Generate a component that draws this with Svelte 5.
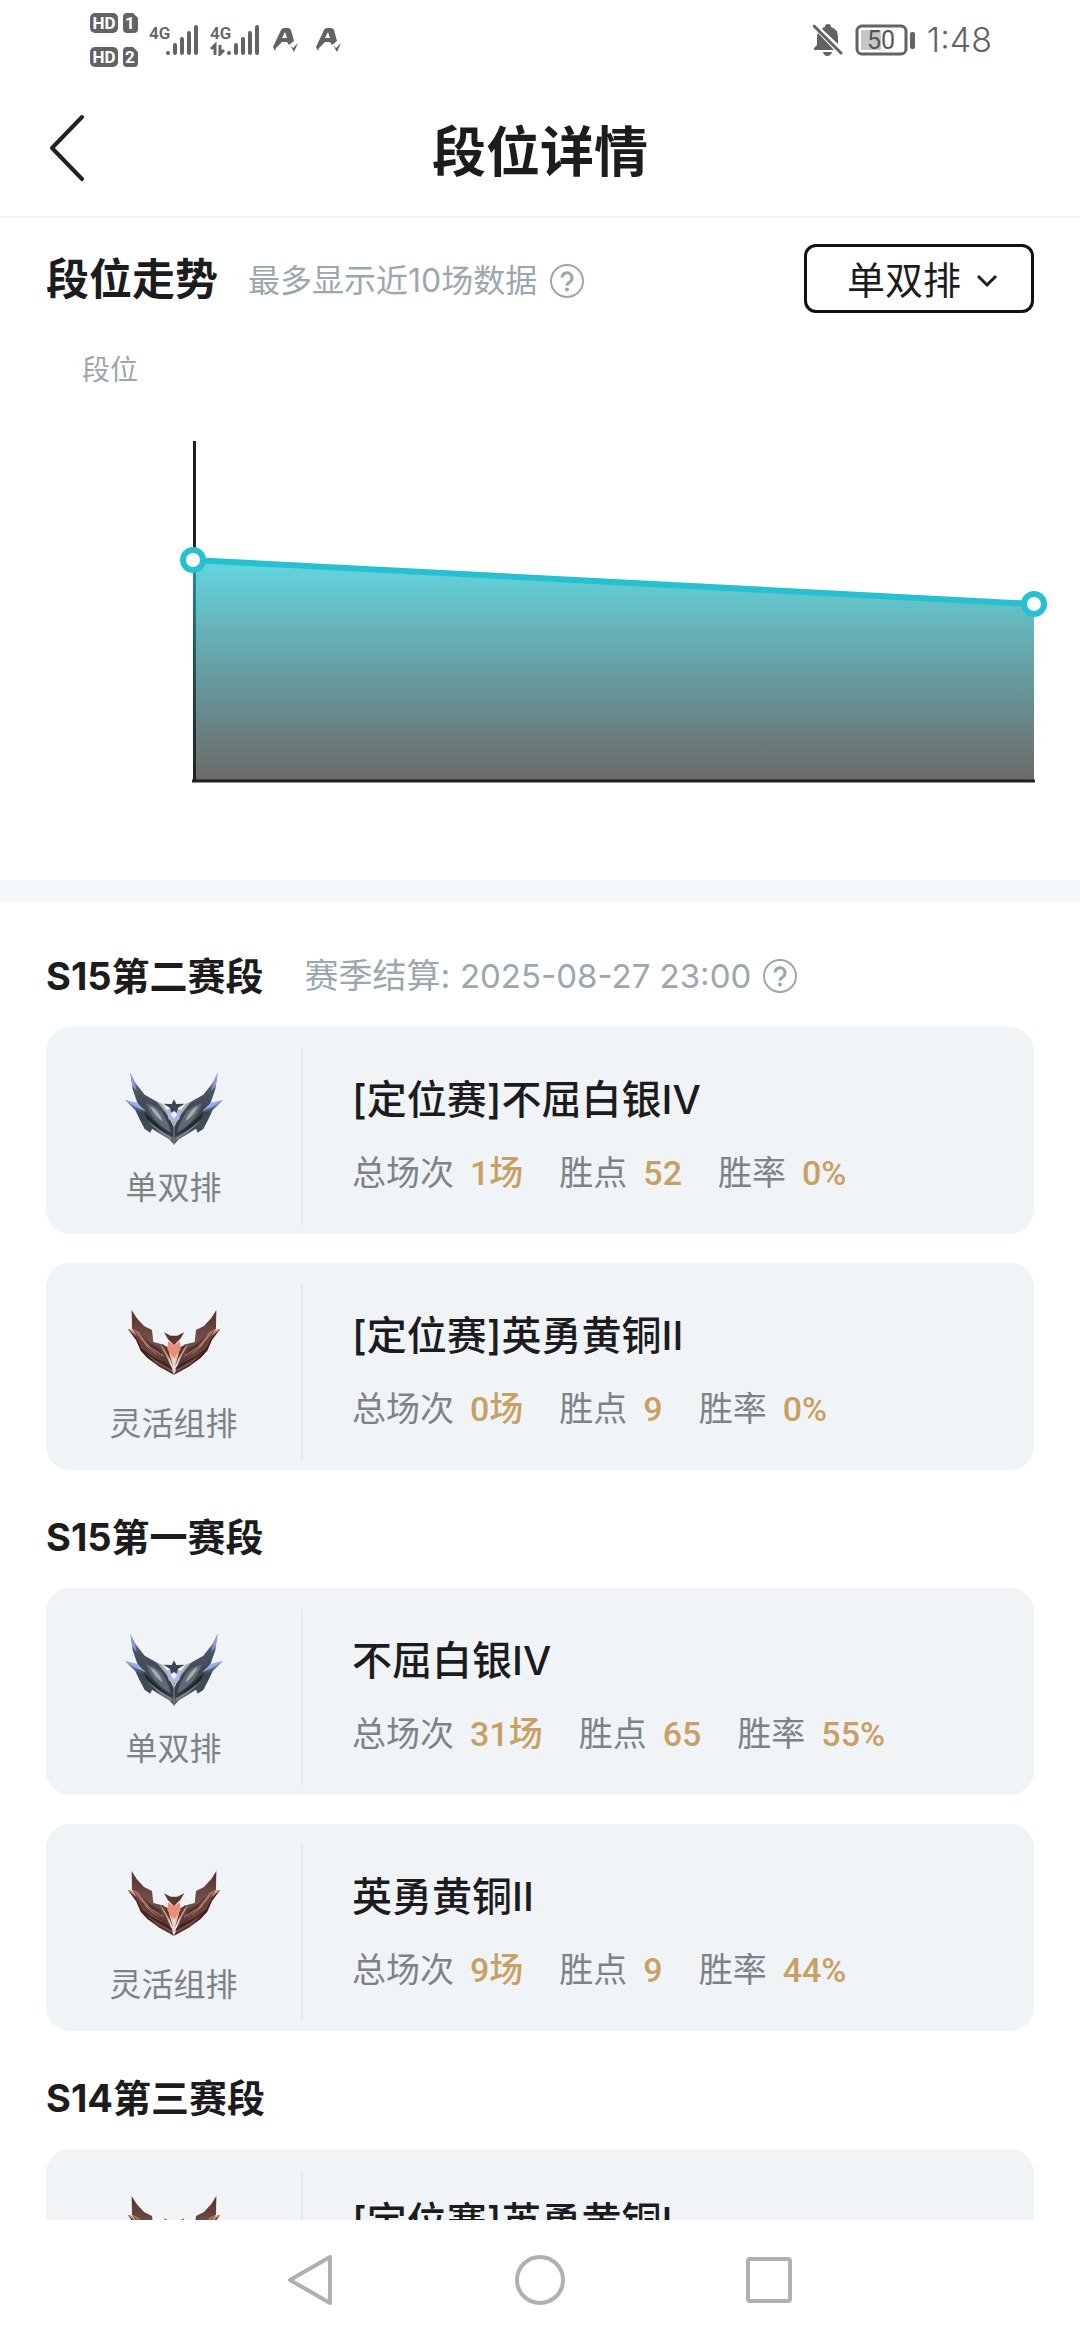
<script>
  const seasons = [
    {
      name: 'S15第二赛段',
      settle: '2025-08-27 23:00',
      ranks: [
        { tier: 'silver', queue: '单双排', title: '[定位赛]不屈白银IV', stats: [['总场次', '1场'], ['胜点', '52'], ['胜率', '0%']] },
        { tier: 'bronze', queue: '灵活组排', title: '[定位赛]英勇黄铜II', stats: [['总场次', '0场'], ['胜点', '9'], ['胜率', '0%']] }
      ]
    },
    {
      name: 'S15第一赛段',
      ranks: [
        { tier: 'silver', queue: '单双排', title: '不屈白银IV', stats: [['总场次', '31场'], ['胜点', '65'], ['胜率', '55%']] },
        { tier: 'bronze', queue: '灵活组排', title: '英勇黄铜II', stats: [['总场次', '9场'], ['胜点', '9'], ['胜率', '44%']] }
      ]
    },
    {
      name: 'S14第三赛段',
      ranks: [{ tier: 'bronze', title: '[定位赛]英勇黄铜I' }]
    }
  ];

  let queue = $state('单双排');
  let chartWidth = $state(1080);

  const left = 194;
  const base = 361;
  let right = $derived(chartWidth - 46);
  let points = $derived([
    { x: left - 1, y: 140 },
    { x: right, y: 184 }
  ]);
  let line = $derived(points.map((p) => `${p.x},${p.y}`).join(' '));
</script>

{#snippet help()}
  <svg class="help" viewBox="0 0 36 36" aria-hidden="true">
    <circle cx="18" cy="18" r="16" fill="none" stroke="currentColor" stroke-width="2" />
    <path d="M13 14.500a5 5 0 1 1 8 4.200c-2 1.300-3 2-3 4" fill="none" stroke="currentColor" stroke-width="3" />
    <circle cx="18" cy="26.500" r="2" fill="currentColor" />
  </svg>
{/snippet}

{#snippet silverHalf()}
  <path d="M75 150 L108 160 L132 182 L160 212 L222 258 V284 L208 268 L180 251 L156 236 L151 248 L134 237 L120 210 L106 181Z" fill="url(#silver-low)" />
  <path d="M91 68 L106 98 L134 134 L166 152 L186 166 L204 196 L222 232 V262 L192 246 L160 220 L132 184 L112 158 L98 118Z" fill="url(#silver-top)" />
  <path d="M138 160 Q176 168 190 194 Q206 218 214 248 Q172 226 150 188Z" fill="#5f6b73" />
  <path d="M150 168 Q176 178 188 214 Q164 200 150 168Z" fill="#a3aeb2" />
  <path d="M132 184 L164 216 L216 262 L170 232 L140 206Z" fill="#20282f" />
  <path d="M140 210 L176 238 L216 262 L218 272 L180 248Z" fill="#77828c" />
  <path d="M75 150 L110 158 L138 184 L106 170Z" fill="#9aabec" />
  <path d="M91 68 L104 98 L110 124 L97 106Z" fill="#8b98e6" />
  <path d="M170 154 L188 162 L222 210 V226 L200 192Z" fill="#a5afba" />
{/snippet}

{#snippet bronzeHalf()}
  <path d="M84 118 L104 122 L122 146 L150 180 L190 206 L222 240 V254 L178 230 L142 204 L122 182 L108 150Z" fill="#3d2220" />
  <path d="M95 60 L110 84 L132 108 L156 120 L160 156 L192 164 L204 206 L218 240 L190 208 L150 178 L120 142 L96 116Z" fill="url(#bronze-top)" />
  <path d="M84 118 L108 124 L130 160 L166 192 L204 222 L160 200 L126 176 L108 142Z" fill="#6d4039" />
  <path d="M98 116 L118 126 L144 160 L184 184 L192 200 L146 172 L120 144Z" fill="#a97468" />
  <path d="M112 122 L148 158 L182 178 L188 194 L150 170Z" fill="#533230" />
  <path d="M84 118 L100 120 L110 138Z" fill="#d9917f" />
  <path d="M136 188 L172 214 L218 240 L214 246 L168 220Z" fill="#7a4a42" />
  <path d="M180 162 L202 184 L212 228 L198 196Z" fill="#cfa496" />
  <path d="M184 162 L204 172 L222 210 V238 L208 204Z" fill="#5b3532" />
{/snippet}

{#snippet emblem(tier)}
  {#if tier === 'silver'}
    <svg class="emblem" viewBox="72 48 300 246" aria-hidden="true">
      {@render silverHalf()}
      <g transform="translate(444 0) scale(-1 1)">{@render silverHalf()}</g>
      <path d="M200 180 L222 172 L244 180 L238 208 L222 218 L206 208Z" fill="#a9b9e2" />
      <path d="M212 192 L222 184 L232 192 L222 206Z" fill="#e8f1ff" />
      <path d="M222 148 L229 162 L254 161 L234 174 L230 188 L222 182 L214 188 L210 174 L190 161 L215 162Z" fill="#3d4650" />
      <path d="M222 214 V284" stroke="#8a949e" stroke-width="3" />
    </svg>
  {:else}
    <svg class="emblem" viewBox="72 36 300 246" aria-hidden="true">
      {@render bronzeHalf()}
      <g transform="translate(444 0) scale(-1 1)">{@render bronzeHalf()}</g>
      <path d="M204 154 L222 166 L240 154 L242 178 L222 208 L202 178Z" fill="#e78f78" />
      <path d="M206 184 L222 204 L238 184 L230 214 L222 228 L214 214Z" fill="#f0b5a4" />
      <path d="M192 127 L212 137 H232 L253 127 L240 148 L222 165 L204 148Z" fill="#5c3532" />
      <path d="M217 206 L222 200 L227 206 V244 L222 254 L217 244Z" fill="#e6d6d0" />
    </svg>
  {/if}
{/snippet}

{#snippet signal(data)}
  <svg class="signal" viewBox="0 0 50 32" aria-hidden="true">
    <text x="0" y="15" class="net">4G</text>
    <g stroke="#636363" stroke-width="4" stroke-linecap="round">
      <path d="M19 29v0M26 21v8M33 15v14M40 9v20M47 3v26" />
    </g>
    {#if data}
      <path d="M5 31V21L1 25M10 21v9l4-4" fill="none" stroke="#636363" stroke-width="3" />
    {/if}
  </svg>
{/snippet}

{#snippet simBadge(n)}
  <svg class="sim" viewBox="0 0 48 20" aria-hidden="true">
    <rect x="0" y="0" width="28" height="20" rx="5" fill="#636363" />
    <text x="14" y="16" class="badge">HD</text>
    <path d="M36 0h7l5 5v11a4 4 0 0 1-4 4h-7a4 4 0 0 1-4-4V4a4 4 0 0 1 3-4z" fill="#636363" />
    <text x="40" y="16" class="badge">{n}</text>
  </svg>
{/snippet}

{#snippet assist()}
  <svg class="assist" viewBox="0 0 26 26" aria-hidden="true">
    <path d="M0 20 L8 3 Q9 1 11 1 H15 Q17 1 18 3 L21 14 L16 18 L14 15 H9 L3 21 L2 24Z M9 11 H14 L12 5Z" fill="#636363" fill-rule="evenodd" />
    <path d="M17 18 L20 21 L25 16 L21 25Z" fill="#636363" />
  </svg>
{/snippet}

<div class="app">
  <div class="status">
    <div class="sims">
      {@render simBadge(1)}
      {@render simBadge(2)}
    </div>
    <div class="signals">
      {@render signal(false)}
      {@render signal(true)}
    </div>
    <div class="assists">
      {@render assist()}
      {@render assist()}
    </div>
    <div class="right">
      <svg class="bell" viewBox="0 0 30 32" aria-hidden="true">
        <path d="M5 9 L21 26 H1 V24 L4 21 V13 Q4 11 5 9Z M9 5 Q10 3 12 3 Q12 0 15 0 Q18 0 18 3 Q25 5 25 13 V20 Z" fill="#636363" />
        <path d="M10 28 H19 Q18 32 14 32 Q11 32 10 28Z" fill="#636363" />
        <path d="M1 2 L28 29" stroke="#636363" stroke-width="3" stroke-linecap="round" />
      </svg>
      <svg class="battery" viewBox="0 0 60 32" aria-hidden="true">
        <rect x="2" y="2" width="49" height="28" rx="5" fill="none" stroke="#636363" stroke-width="3" />
        <rect x="6" y="6" width="20" height="20" fill="#c6c6c6" />
        <rect x="55" y="8" width="5" height="17" rx="2" fill="#636363" />
        <text x="26" y="25" class="level">50</text>
      </svg>
      <span class="clock">1:48</span>
    </div>
  </div>

  <header>
    <button class="back" aria-label="返回">
      <svg viewBox="0 0 40 68" aria-hidden="true">
        <path d="M36 3 L6 34 L36 65" fill="none" stroke="#222" stroke-width="4" stroke-linecap="round" stroke-linejoin="round" />
      </svg>
    </button>
    <h1>段位详情</h1>
  </header>

  <main>
    <section class="trend">
      <div class="trend-head">
        <h2>段位走势</h2>
        <div class="hint">
          <span>最多显示近10场数据</span>
          {@render help()}
        </div>
        <div class="picker">
          <select bind:value={queue} aria-label="排位类型">
            <option>单双排</option>
            <option>灵活组排</option>
          </select>
          <svg viewBox="0 0 22 14" aria-hidden="true">
            <path d="M2 2 L11 11 L20 2" fill="none" stroke="#1c1c1c" stroke-width="3" />
          </svg>
        </div>
      </div>
      <div class="axis-name">段位</div>
      <div class="chart" bind:clientWidth={chartWidth}>
        <svg width="100%" height="380" role="img" aria-label="段位走势">
          <defs>
            <linearGradient id="area" gradientUnits="userSpaceOnUse" x1="0" y1="140" x2="0" y2="361">
              <stop offset="0" stop-color="#1fc6d3" stop-opacity="0.7" />
              <stop offset="1" stop-color="#1f1d1c" stop-opacity="0.66" />
            </linearGradient>
            <linearGradient id="silver-top" gradientUnits="userSpaceOnUse" x1="0" y1="68" x2="0" y2="240">
              <stop offset="0" stop-color="#9aa8f0" />
              <stop offset="0.3" stop-color="#4c5664" />
              <stop offset="1" stop-color="#343d44" />
            </linearGradient>
            <linearGradient id="silver-low" gradientUnits="userSpaceOnUse" x1="0" y1="150" x2="0" y2="284">
              <stop offset="0" stop-color="#8496d8" />
              <stop offset="0.3" stop-color="#3c464f" />
              <stop offset="1" stop-color="#4b555f" />
            </linearGradient>
            <linearGradient id="bronze-top" gradientUnits="userSpaceOnUse" x1="0" y1="60" x2="0" y2="240">
              <stop offset="0" stop-color="#54322f" />
              <stop offset="0.5" stop-color="#74504a" />
              <stop offset="1" stop-color="#4f302d" />
            </linearGradient>
          </defs>
          <path d="M{left + 0.5} 21 V{base}" stroke="#222" stroke-width="3" />
          <path d="M{left - 2} {base} H{right + 1}" stroke="#222" stroke-width="3" />
          <polygon points="{left},{base} {line} {right},{base}" fill="url(#area)" />
          <polyline points={line} fill="none" stroke="#27c0d0" stroke-width="6" />
          {#each points as p}
            <circle cx={p.x} cy={p.y} r="10" fill="#fff" stroke="#27c0d0" stroke-width="6" />
          {/each}
        </svg>
      </div>
    </section>

    <div class="band"></div>

    <div class="seasons">
      {#each seasons as season}
        <section>
          <div class="season-head">
            <h3>{season.name}</h3>
            {#if season.settle}
              <span class="settle">赛季结算: <time>{season.settle}</time></span>
              {@render help()}
            {/if}
          </div>
          <div class="cards">
            {#each season.ranks as rank}
              <article class="card">
                <div class="tier">
                  {@render emblem(rank.tier)}
                  {#if rank.queue}
                    <span>{rank.queue}</span>
                  {/if}
                </div>
                <div class="info">
                  <h4>{rank.title}</h4>
                  {#if rank.stats}
                    <dl>
                      {#each rank.stats as [label, value]}
                        <div><dt>{label}</dt><dd>{value}</dd></div>
                      {/each}
                    </dl>
                  {/if}
                </div>
              </article>
            {/each}
          </div>
        </section>
      {/each}
    </div>
  </main>

  <nav>
    <button aria-label="返回">
      <svg viewBox="0 0 54 54"><path d="M46 4 V50 L6 27Z" /></svg>
    </button>
    <button aria-label="主页">
      <svg viewBox="0 0 54 54"><circle cx="27" cy="27" r="23" /></svg>
    </button>
    <button aria-label="最近任务">
      <svg viewBox="0 0 54 54"><rect x="6" y="6" width="42" height="42" rx="2" /></svg>
    </button>
  </nav>
</div>

<style>
  :global(body) {
    background: #fff;
  }
  .app {
    display: flex;
    flex-direction: column;
    height: 100vh;
    background: #fff;
    color: #1c1c1e;
    font-family: Inter, 'Noto Sans CJK SC', sans-serif;
  }
  h1, h2, h3, h4, dl, dd {
    margin: 0;
  }
  button {
    display: flex;
    padding: 0;
    border: 0;
    background: none;
  }
  svg {
    display: block;
    flex: none;
  }

  .status {
    display: flex;
    align-items: center;
    flex: none;
    height: 80px;
    padding: 0 88px 0 90px;
    box-sizing: border-box;
  }
  .sims {
    display: grid;
    gap: 14px;
  }
  .sim {
    width: 48px;
    height: 20px;
  }
  .signals {
    display: flex;
    gap: 11px;
    margin-left: 11px;
  }
  .signal {
    width: 50px;
    height: 32px;
  }
  .assists {
    display: flex;
    gap: 17px;
    margin-left: 13px;
  }
  .assist {
    width: 26px;
    height: 26px;
  }
  .right {
    display: flex;
    align-items: center;
    gap: 12px;
    margin-left: auto;
  }
  .bell {
    width: 30px;
    height: 32px;
  }
  .battery {
    width: 60px;
    height: 32px;
  }
  .clock {
    color: #636363;
    font-size: 34px;
    line-height: 40px;
    font-weight: 300;
  }
  .net {
    fill: #636363;
    font: 600 17px Roboto, sans-serif;
  }
  .badge {
    fill: #fff;
    font: 700 17px Roboto, sans-serif;
    text-anchor: middle;
  }
  .level {
    fill: #555;
    font: 400 25px Roboto, sans-serif;
    text-anchor: middle;
  }

  header {
    display: grid;
    grid-template-columns: 1fr auto 1fr;
    align-items: center;
    flex: none;
    height: 138px;
    padding: 0 46px;
    box-sizing: border-box;
    border-bottom: 2px solid #eef0f2;
  }
  .back svg {
    width: 40px;
    height: 68px;
  }
  h1 {
    padding-top: 10px;
    font-size: 54px;
    line-height: 64px;
    font-weight: 700;
  }

  main {
    flex: 1;
    min-height: 0;
    overflow: hidden;
  }
  .trend {
    padding: 26px 0 80px;
  }
  .trend-head {
    display: flex;
    align-items: center;
    padding: 0 46px;
  }
  h2 {
    font-size: 43px;
    line-height: 60px;
    font-weight: 700;
  }
  .hint {
    display: flex;
    align-items: center;
    gap: 12px;
    padding: 5px 0 0 30px;
    color: #9ba7ae;
    font-size: 32px;
    line-height: 40px;
  }
  .help {
    width: 36px;
    height: 36px;
    color: #9ba7ae;
  }
  .picker {
    display: grid;
    align-items: center;
    margin-left: auto;
  }
  .picker select,
  .picker svg {
    grid-area: 1 / 1;
  }
  .picker svg {
    justify-self: end;
    width: 22px;
    height: 14px;
    margin: 4px 36px 0 0;
    pointer-events: none;
  }
  select {
    appearance: none;
    width: 230px;
    height: 69px;
    padding: 3px 0 0 40px;
    border: 3px solid #111;
    border-radius: 12px;
    background: #fff;
    color: #1c1c1e;
    font: inherit;
    font-size: 38px;
  }
  .axis-name {
    margin: 37px 0 30px;
    padding-left: 82px;
    color: #9ba7ae;
    font-size: 28px;
    line-height: 40px;
  }

  .band {
    height: 23px;
    background: #f4f7fb;
  }

  .seasons {
    padding: 6px 46px 0;
  }
  .season-head {
    display: flex;
    align-items: center;
    height: 118px;
    padding-top: 16px;
    box-sizing: border-box;
  }
  h3 {
    font-size: 38px;
    line-height: 48px;
    font-weight: 700;
  }
  .settle {
    margin: 0 11px 0 41px;
    color: #9ba7ae;
    font-size: 34px;
    line-height: 48px;
  }
  time {
    font-size: 33px;
  }
  .cards {
    display: grid;
    gap: 29px;
  }
  .card {
    display: flex;
    height: 207px;
    border-radius: 24px;
    background: #f0f4f7;
  }
  .tier {
    display: flex;
    flex-direction: column;
    align-items: center;
    gap: 20px;
    flex: none;
    width: 257px;
    margin: 21px 0 9px;
    padding-top: 18px;
    box-sizing: border-box;
    border-right: 2px solid #e5eaee;
    color: #7b8386;
    font-size: 32px;
    line-height: 40px;
  }
  .emblem {
    width: 100px;
    height: 82px;
  }
  .info {
    padding: 48px 0 0 49px;
  }
  h4 {
    font-size: 40px;
    line-height: 50px;
    font-weight: 500;
  }
  dl {
    display: flex;
    gap: 36px;
    margin-top: 24px;
    font-size: 34px;
    line-height: 48px;
  }
  dl div {
    display: flex;
    gap: 16px;
  }
  dt {
    color: #7b8386;
  }
  dd {
    color: #c8a063;
    font-family: Roboto, 'Noto Sans CJK SC', sans-serif;
    font-weight: 500;
  }

  nav {
    display: flex;
    justify-content: center;
    align-items: center;
    gap: 175px;
    flex: none;
    height: 120px;
    background: #fff;
  }
  nav svg {
    width: 54px;
    height: 54px;
    fill: none;
    stroke: #b0b0b0;
    stroke-width: 4;
    stroke-linejoin: round;
  }
</style>
